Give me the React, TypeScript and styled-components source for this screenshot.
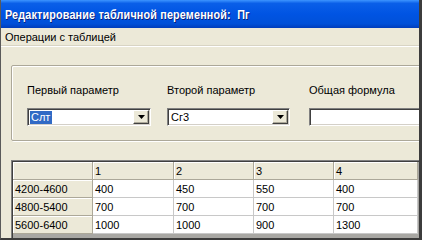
import React from 'react'
import styled, { createGlobalStyle } from 'styled-components'

const GlobalStyle = createGlobalStyle`
  html, body {
    margin: 0;
    padding: 0;
    background: #ece9d8;
  }
  body {
    font-family: 'Liberation Sans', Arial, sans-serif;
  }
`

const uiFont = `'Liberation Sans', Arial, sans-serif`

const Window = styled.div`
  width: 422px;
  height: 240px;
  overflow: hidden;
  background: #ece9d8;
  display: flex;
  flex-direction: column;
  box-sizing: border-box;
  border-left: 1px solid #5a5a5a;
  border-right: 3px solid #3c3c3c;
  border-bottom: 2px solid #3c3c3c;
`

const TitleBar = styled.div`
  height: 28px;
  flex: none;
  display: flex;
  align-items: center;
  padding-left: 4px;
  background: linear-gradient(to bottom, #3d95ff 0%, #0a5fe8 12%, #0054e3 50%, #0050d8 85%, #003dbb 100%);
`

const TitleText = styled.span`
  display: inline-block;
  color: #fff;
  font-family: ${uiFont};
  font-weight: bold;
  font-size: 13px;
  letter-spacing: 0.2px;
  text-shadow: 1px 1px 0 #0a1e78;
  white-space: pre;
  transform: scaleX(0.83);
  transform-origin: left center;
`

const MenuBar = styled.div`
  height: 18px;
  flex: none;
  display: flex;
  align-items: center;
  padding-left: 4px;
  font-family: ${uiFont};
  font-size: 11px;
  color: #000;
  border-bottom: 1px solid #ffffff;
  box-shadow: 0 -1px 0 #d8d4c4 inset;
`

const Body = styled.div`
  flex: 1;
  display: flex;
  flex-direction: column;
  padding-left: 10px;
`

const GroupBox = styled.div`
  margin-top: 18px;
  width: 430px;
  height: 76px;
  flex: none;
  box-sizing: border-box;
  border: 1px solid #aca899;
  box-shadow: 1px 1px 0 #fff inset, 1px 1px 0 #fff;
  border-radius: 2px;
  display: flex;
  padding: 15px 0 0 15px;
`

const Field = styled.div<{ $w: number }>`
  width: ${p => p.$w}px;
  flex: none;
  display: flex;
  flex-direction: column;
  gap: 9px;
`

const Label = styled.div`
  font-family: ${uiFont};
  font-size: 11px;
  line-height: 18px;
  color: #000;
  white-space: nowrap;
`

const Combo = styled.div<{ $w: number }>`
  width: ${p => p.$w}px;
  height: 18px;
  box-sizing: border-box;
  background: #fff;
  border-top: 1px solid #808080;
  border-left: 1px solid #808080;
  border-right: 1px solid #fff;
  border-bottom: 1px solid #fff;
  box-shadow: 1px 1px 0 #404040 inset, -1px -1px 0 #d4d0c8 inset;
  display: flex;
  align-items: center;
  padding: 2px;
`

const ComboText = styled.span<{ $sel?: boolean }>`
  font-family: ${uiFont};
  font-size: 11px;
  line-height: 13px;
  padding: 0 1px;
  color: ${p => (p.$sel ? '#fff' : '#000')};
  background: ${p => (p.$sel ? '#316ac5' : 'transparent')};
  width: ${p => (p.$sel ? '20px' : 'auto')};
`

const Spacer = styled.div`
  flex: 1;
`

const DropButton = styled.div`
  width: 16px;
  height: 14px;
  box-sizing: border-box;
  background: #ece9d8;
  border-top: 1px solid #fff;
  border-left: 1px solid #fff;
  border-right: 1px solid #404040;
  border-bottom: 1px solid #404040;
  box-shadow: -1px -1px 0 #aca899 inset;
  display: flex;
  align-items: center;
  justify-content: center;
  margin-right: -1px;
`

const Grid = styled.div`
  margin-top: 19px;
  width: 408px;
  flex: 1;
  box-sizing: border-box;
  border-top: 1px solid #808080;
  border-left: 1px solid #808080;
  box-shadow: 1px 1px 0 #404040 inset;
  padding: 1px 0 0 1px;
  background: #a8a7a3;
  display: grid;
  grid-template-columns: 80px 81px 80px 80px 84px;
  grid-auto-rows: 18px;
  align-content: start;
`

const HeadCell = styled.div`
  background: #ece9d8;
  box-sizing: border-box;
  border-right: 1px solid #aca899;
  border-bottom: 1px solid #aca899;
  box-shadow: 1px 1px 0 #fff inset;
  font-family: ${uiFont};
  font-size: 11px;
  padding: 3px 0 0 2px;
  color: #000;
`

const Cell = styled.div`
  background: #fff;
  box-sizing: border-box;
  border-right: 1px solid #c8c8c8;
  border-bottom: 1px solid #c8c8c8;
  font-family: ${uiFont};
  font-size: 11px;
  padding: 3px 0 0 2px;
  color: #000;
`

const Arrow = () => (
  <svg width="7" height="4" viewBox="0 0 7 4">
    <path d="M0 0h7L3.5 4z" fill="#000" />
  </svg>
)

const cols = ['1', '2', '3', '4']
const rows = [
  { name: '4200-4600', vals: ['400', '450', '550', '400'] },
  { name: '4800-5400', vals: ['700', '700', '700', '700'] },
  { name: '5600-6400', vals: ['1000', '1000', '900', '1300'] },
]

export default function App() {
  return (
    <>
      <GlobalStyle />
      <Window>
        <TitleBar>
          <TitleText>Редактирование табличной переменной:  Пг</TitleText>
        </TitleBar>
        <MenuBar>Операции с таблицей</MenuBar>
        <Body>
          <GroupBox>
            <Field $w={140}>
              <Label>Первый параметр</Label>
              <Combo $w={124}>
                <ComboText $sel>Слт</ComboText>
                <Spacer />
                <DropButton>
                  <Arrow />
                </DropButton>
              </Combo>
            </Field>
            <Field $w={142}>
              <Label>Второй параметр</Label>
              <Combo $w={123}>
                <ComboText>Сг3</ComboText>
                <Spacer />
                <DropButton>
                  <Arrow />
                </DropButton>
              </Combo>
            </Field>
            <Field $w={140}>
              <Label>Общая формула</Label>
              <Combo $w={130} />
            </Field>
          </GroupBox>
          <Grid>
            <HeadCell />
            {cols.map(c => (
              <HeadCell key={c}>{c}</HeadCell>
            ))}
            {rows.map(r => (
              <React.Fragment key={r.name}>
                <HeadCell>{r.name}</HeadCell>
                {r.vals.map((v, i) => (
                  <Cell key={i}>{v}</Cell>
                ))}
              </React.Fragment>
            ))}
          </Grid>
        </Body>
      </Window>
    </>
  )
}
